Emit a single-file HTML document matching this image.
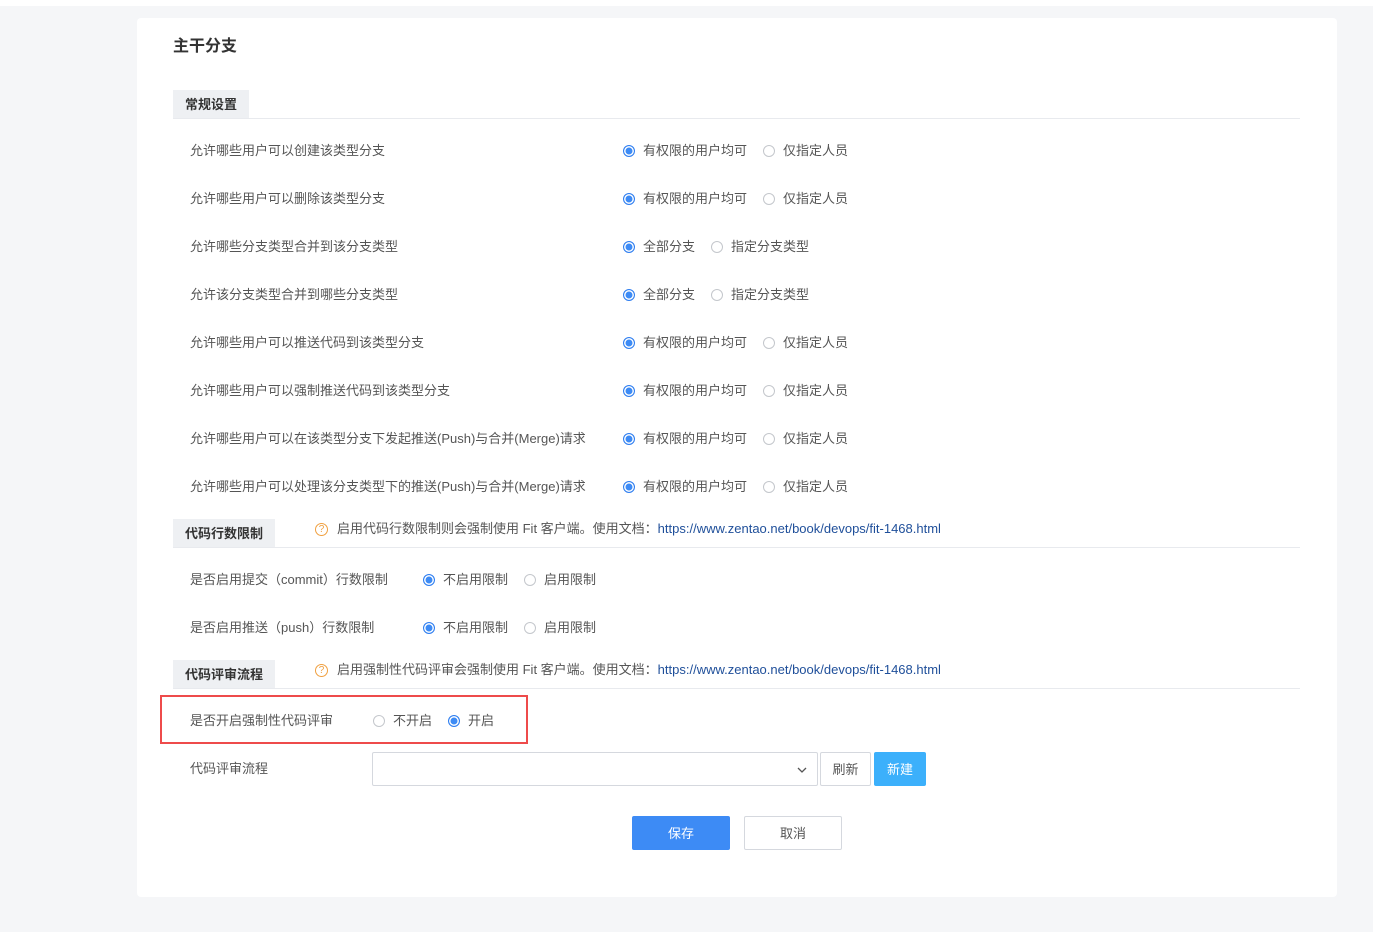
<!DOCTYPE html>
<html><head><meta charset="utf-8"><style>
*{margin:0;padding:0;box-sizing:border-box}
body{width:1373px;height:932px;background:#f5f6f8;position:relative;overflow:hidden;font-family:"Liberation Sans","Noto Sans CJK SC",sans-serif;font-size:13px;color:#555}
.top{position:absolute;left:0;top:0;width:1373px;height:6px;background:#fff}
.card{position:absolute;left:137px;top:18px;width:1200px;height:879px;background:#fff;border-radius:4px}
.a{position:absolute;white-space:nowrap;line-height:20px}
.r{position:absolute;width:12px;height:12px;border-radius:50%;border:1px solid #c4c7cc;background:#fff}
.r.c{border-color:#2f7ef0;background:#3d8bf5;box-shadow:inset 0 0 0 1.5px #fff}
.tab{position:absolute;left:173px;height:28px;background:#eef0f3;font-weight:bold;color:#333;font-size:13px;line-height:29px;padding-left:12px}
.line{position:absolute;left:173px;width:1127px;height:1px;background:#e8eaee}
.q{position:absolute;width:13px;height:13px;border:1px solid #f0a040;border-radius:50%;color:#f0a040;font-size:10px;line-height:11px;text-align:center}
.btn{position:absolute;text-align:center;border-radius:2px}
</style></head><body>
<div class="top"></div>
<div class="card"></div>
<div class="a" style="left:173px;top:36px;font-size:16px;color:#333;font-weight:bold;line-height:22px">主干分支</div>

<div class="tab" style="top:90px;width:76px">常规设置</div>
<div class="line" style="top:118px"></div>

<div class="tab" style="top:519px;width:102px">代码行数限制</div>
<div class="line" style="top:547px"></div>
<div class="q" style="left:315px;top:523px">?</div>
<div class="a" style="left:337px;top:519px">启用代码行数限制则会强制使用 Fit 客户端。使用文档：<span style="color:#1f4f9a">https://www.zentao.net/book/devops/fit-1468.html</span></div>

<div class="tab" style="top:660px;width:102px">代码评审流程</div>
<div class="line" style="top:688px"></div>
<div class="q" style="left:315px;top:664px">?</div>
<div class="a" style="left:337px;top:660px">启用强制性代码评审会强制使用 Fit 客户端。使用文档：<span style="color:#1f4f9a">https://www.zentao.net/book/devops/fit-1468.html</span></div>

<div id="rows"></div>
<script>
var rows=[
["允许哪些用户可以创建该类型分支","有权限的用户均可","仅指定人员",769],
["允许哪些用户可以删除该类型分支","有权限的用户均可","仅指定人员",769],
["允许哪些分支类型合并到该分支类型","全部分支","指定分支类型",717],
["允许该分支类型合并到哪些分支类型","全部分支","指定分支类型",717],
["允许哪些用户可以推送代码到该类型分支","有权限的用户均可","仅指定人员",769],
["允许哪些用户可以强制推送代码到该类型分支","有权限的用户均可","仅指定人员",769],
["允许哪些用户可以在该类型分支下发起推送(Push)与合并(Merge)请求","有权限的用户均可","仅指定人员",769],
["允许哪些用户可以处理该分支类型下的推送(Push)与合并(Merge)请求","有权限的用户均可","仅指定人员",769]];
var h="";
function row(y,label,lx,o1,x1,c1,o2,x2,c2){
 h+='<div class="a" style="left:'+lx+'px;top:'+(y-9)+'px">'+label+'</div>';
 h+='<div class="r'+(c1?' c':'')+'" style="left:'+(x1-6)+'px;top:'+(y-5)+'px"></div><div class="a" style="left:'+(x1+14)+'px;top:'+(y-9)+'px">'+o1+'</div>';
 h+='<div class="r'+(c2?' c':'')+'" style="left:'+(x2-6)+'px;top:'+(y-5)+'px"></div><div class="a" style="left:'+(x2+14)+'px;top:'+(y-9)+'px">'+o2+'</div>';
}
rows.forEach(function(r,i){row(150+48*i,r[0],190,r[1],629,1,r[2],r[3],0);});
row(579,"是否启用提交（commit）行数限制",190,"不启用限制",429,1,"启用限制",530,0);
row(627,"是否启用推送（push）行数限制",190,"不启用限制",429,1,"启用限制",530,0);
row(720,"是否开启强制性代码评审",190,"不开启",379,0,"开启",454,1);
document.getElementById("rows").innerHTML=h;
</script>
<div style="position:absolute;left:160px;top:695px;width:368px;height:49px;border:2px solid #ee4b4b"></div>
<div class="a" style="left:190px;top:759px">代码评审流程</div>
<div style="position:absolute;left:372px;top:752px;width:446px;height:34px;border:1px solid #d5d8de;border-radius:2px"></div>
<svg style="position:absolute;left:797px;top:766px" width="10" height="8"><path d="M1 2l4 4 4-4" fill="none" stroke="#555" stroke-width="1.3"/></svg>
<div class="btn" style="left:820px;top:752px;width:51px;height:34px;border:1px solid #d5d8de;line-height:33px">刷新</div>
<div class="btn" style="left:874px;top:752px;width:52px;height:34px;background:#3cb0fb;color:#fff;line-height:35px">新建</div>
<div class="btn" style="left:632px;top:816px;width:98px;height:34px;background:#3d8bf5;color:#fff;line-height:35px">保存</div>
<div class="btn" style="left:744px;top:816px;width:98px;height:34px;border:1px solid #d5d8de;line-height:33px">取消</div>
</body></html>
